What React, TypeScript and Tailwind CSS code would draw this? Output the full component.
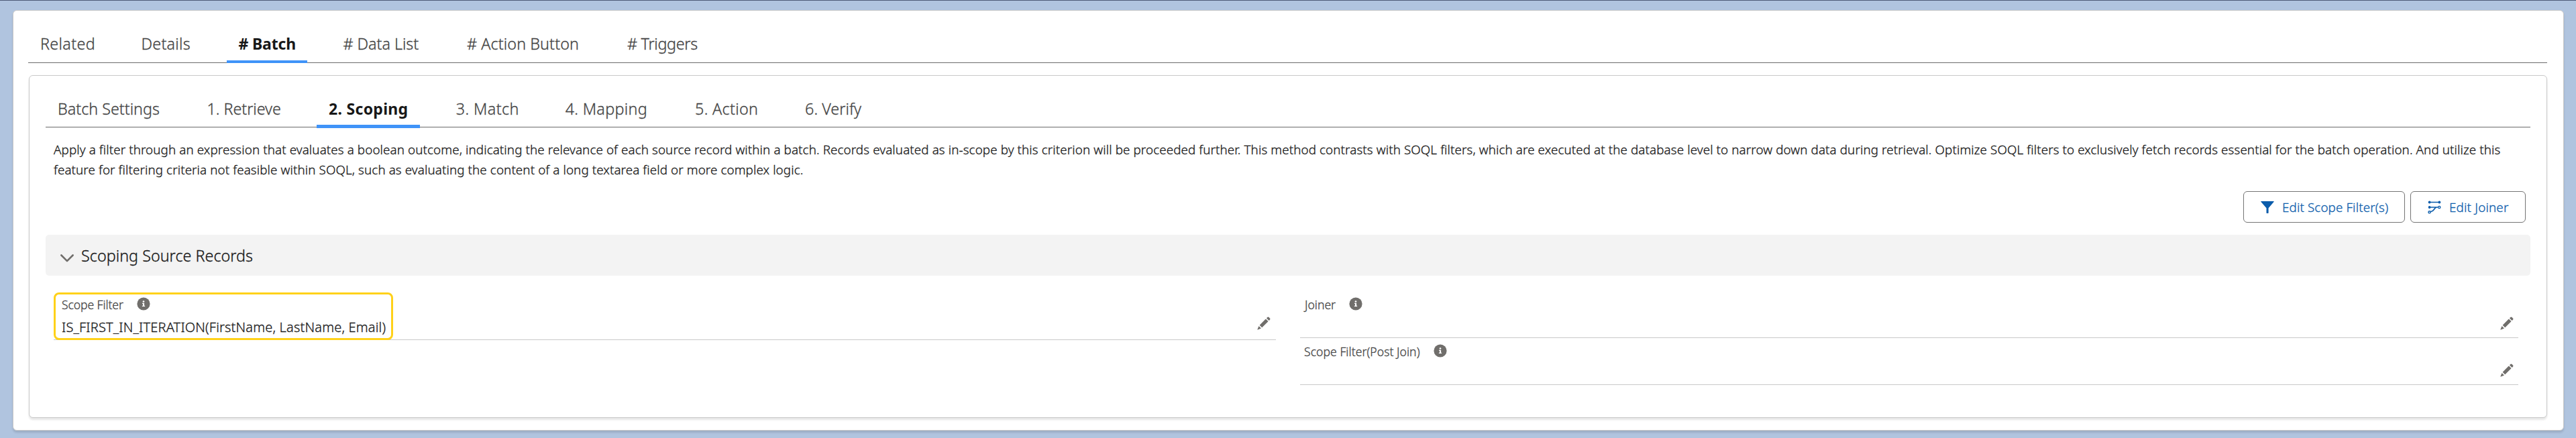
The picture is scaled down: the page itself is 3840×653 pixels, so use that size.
import type { ReactNode } from "react";

type Tab = { label: string; box: string; active?: boolean };

const recordTabs: Tab[] = [
  { label: "Related", box: "w-[78.5px] tracking-[0.35px]" },
  { label: "Details", box: "w-[73px] tracking-[0.25px]" },
  { label: "# Batch", box: "w-[84px] tracking-[-0.17px]", active: true },
  { label: "# Data List", box: "w-[112.5px] tracking-[-0.03px]" },
  { label: "# Action Button", box: "w-[167px] tracking-[0.1px]" },
  { label: "# Triggers", box: "w-[106px] tracking-[-0.3px]" },
];

const batchTabs: Tab[] = [
  { label: "Batch Settings", box: "w-[150.5px] tracking-[0.01px]" },
  { label: "1. Retrieve", box: "w-[109.5px] tracking-[-0.02px]" },
  { label: "2. Scoping", box: "w-[117.7px] tracking-[0.3px]", active: true },
  { label: "3. Match", box: "w-[91px] tracking-[0.43px]" },
  { label: "4. Mapping", box: "w-[121.4px] tracking-[0.33px]" },
  { label: "5. Action", box: "w-[92px] tracking-[0.33px]" },
  { label: "6. Verify", box: "w-[85px] tracking-[0.03px]" },
];

function TabBar({ tabs, className, bar }: { tabs: Tab[]; className: string; bar: string }) {
  return (
    <nav className={`flex gap-9 border-b border-[#6b6b6b] pt-[34px] leading-[30px] ${className}`}>
      {tabs.map((tab) => (
        <div key={tab.label} className="flex flex-col justify-between px-[18px]">
          <span
            className={`block whitespace-nowrap ${tab.box} ${
              tab.active
                ? "text-[23px] font-bold text-[#181818] [-webkit-text-stroke:0]"
                : "text-[23.3px] text-[#444444]"
            }`}
          >
            {tab.label}
          </span>
          {tab.active && <span className={`-mx-[18px] block shrink-0 bg-[#3f93f8] ${bar}`} />}
        </div>
      ))}
    </nav>
  );
}

function InfoIcon() {
  return (
    <svg viewBox="0 0 20 20" className="size-5 shrink-0">
      <circle cx="10" cy="10" r="9.6" fill="#706e6b" />
      <circle cx="10" cy="6.5" r="1.35" fill="#fff" />
      <path d="M8 8.7h3.1v4.1h1v1.3H7.9v-1.3h1.1V10H8z" fill="#fff" />
    </svg>
  );
}

function PencilIcon() {
  return (
    <svg viewBox="0 0 20 20" className="size-5 shrink-0" fill="#706e6b">
      <path d="M3.9 12.4 12.5 3.8a.5.5 0 0 1 .7 0l3 3a.5.5 0 0 1 0 .7l-8.6 8.6a.5.5 0 0 1-.7 0l-3-3a.5.5 0 0 1 0-.7Z" />
      <path d="m14.3 2 .9-.9a1.7 1.7 0 0 1 2.4 0l1.3 1.3a1.7 1.7 0 0 1 0 2.4l-.9.9a.5.5 0 0 1-.7 0l-3-3a.5.5 0 0 1 0-.7Z" />
      <path d="M2.3 14.5.5 19a.5.5 0 0 0 .6.6l4.5-1.8a.4.4 0 0 0 .1-.6l-2.8-2.8a.4.4 0 0 0-.6.1Z" />
    </svg>
  );
}

function FilterIcon() {
  return (
    <svg viewBox="0 0 20 20" className="size-5" fill="#0b5cab">
      <path d="M.9 1h18.2c.5 0 .8.6.4 1l-7.9 9.2v7c0 .4-.3.7-.6.7H9.2c-.4 0-.7-.3-.7-.7v-7L.5 2C.1 1.6.4 1 .9 1Z" />
    </svg>
  );
}

function JoinerIcon() {
  return (
    <svg viewBox="0 0 20 20" className="size-5" fill="none" stroke="#0b5cab" strokeWidth="1.7">
      <path d="M3 2.5h14M3 10h12M4.3 16.7c3.4-.5 4.2-2.1 5.4-3.9 1-1.5 2-2.5 3.6-2.8" />
      <circle cx="2.6" cy="2.5" r="1.9" fill="#0b5cab" stroke="none" />
      <circle cx="17.4" cy="2.5" r="1.9" fill="#0b5cab" stroke="none" />
      <circle cx="2.6" cy="10" r="1.9" fill="#0b5cab" stroke="none" />
      <circle cx="17.2" cy="10" r="1.6" strokeWidth="1.4" />
      <circle cx="2.6" cy="17.3" r="1.6" strokeWidth="1.4" />
    </svg>
  );
}

function ActionButton({ icon, className, children }: { icon: ReactNode; className: string; children: ReactNode }) {
  return (
    <button
      className={`flex h-[47px] items-center gap-3 rounded-md border border-[#747474] bg-white pl-[25px] text-[18.8px] leading-[30px] whitespace-nowrap text-[#0b5cab] ${className}`}
    >
      {icon}
      {children}
    </button>
  );
}

function FieldLabel({ text, className, gap }: { text: string; className: string; gap: string }) {
  return (
    <div className={`flex text-[17.6px] leading-6 text-[#444444] ${className}`}>
      <span className="whitespace-nowrap">{text}</span>
      <span className={`-mt-px flex h-6 items-center ${gap}`}>
        <InfoIcon />
      </span>
    </div>
  );
}

export default function App() {
  return (
    <div className="flex h-[653px] w-[3840px] flex-col border-t border-[#4d5a76] bg-[#b0c4df] pt-[14px] pr-[18px] pl-[19px] font-['Noto_Sans',sans-serif] font-light text-[#181818] [-webkit-text-stroke:0.3px]">
      <main className="h-[627px] rounded-[6px] border border-[#c9c9c9] bg-white pr-6 pl-[23px] shadow-[0_3px_3px_rgba(0,0,0,0.12)]">
        <TabBar tabs={recordTabs} className="-ml-px h-[78px]" bar="-mb-px h-1" />

        <section className="mt-[18px] h-[511px] rounded-[6px] border border-[#c9c9c9] bg-white px-6 shadow-[0_3px_3px_rgba(0,0,0,0.1)]">
          <TabBar tabs={batchTabs} className="h-[77px]" bar="-mb-[2px] h-[5px]" />

          <p className="mt-[18px] pr-3 pl-3 text-[18.8px] leading-[30px] tracking-[0.11px]">
            Apply a filter through an expression that evaluates a boolean outcome, indicating the relevance of each
            source record within a batch. Records evaluated as in-scope by this criterion will be proceeded further.
            This method contrasts with SOQL filters, which are executed at the database level to narrow down data during
            retrieval. Optimize SOQL filters to exclusively fetch records essential for the batch operation. And utilize
            this feature for filtering criteria not feasible within SOQL, such as evaluating the content of a long
            textarea field or more complex logic.
          </p>

          <div className="mt-[17px] flex justify-end gap-2 pr-[7px]">
            <ActionButton icon={<FilterIcon />} className="w-[241px] tracking-[0.13px]">
              Edit Scope Filter(s)
            </ActionButton>
            <ActionButton icon={<JoinerIcon />} className="w-[172px] tracking-[0.19px]">
              Edit Joiner
            </ActionButton>
          </div>

          <h2 className="mt-[18px] flex h-[61px] items-center rounded-[5px] bg-[#f3f3f3] pl-[22px] text-[23.3px] leading-[30px] tracking-[0.04px]">
            <svg
              viewBox="0 0 20 12"
              className="mt-[9px] mr-[11px] h-3 w-5"
              fill="none"
              stroke="#706e6b"
              strokeWidth="2.6"
              strokeLinecap="round"
              strokeLinejoin="round"
            >
              <path d="m1.4 1.5 8.6 8.7 8.6-8.7" />
            </svg>
            <span className="pt-px">Scoping Source Records</span>
          </h2>

          <div className="mt-[25px] flex items-start gap-9 pl-3">
            <div className="flex h-[71px] w-[1822px] items-end justify-between border-b border-[#c9c9c9] pr-2">
              <div className="-mb-px h-[71px] w-[506px] self-start rounded-[8px] border-[3px] border-[#ffd119] pt-[3px] pl-[9px]">
                <FieldLabel text="Scope Filter" className="tracking-[-0.1px]" gap="ml-[20px]" />
                <div className="mt-[8px] text-[20px] leading-7 tracking-[0.18px] whitespace-nowrap">
                  IS_FIRST_IN_ITERATION(FirstName, LastName, Email)
                </div>
              </div>
              <div className="pb-[14px]">
                <PencilIcon />
              </div>
            </div>

            <div className="w-[1816px]">
              <div className="flex h-[68px] justify-between border-b border-[#c9c9c9] pr-[7px] pl-[7px]">
                <FieldLabel text="Joiner" className="pt-[6px]" gap="ml-[20px]" />
                <div className="self-end pb-[11px]">
                  <PencilIcon />
                </div>
              </div>
              <div className="flex h-[70px] justify-between border-b border-[#c9c9c9] pr-[7px] pl-[6px]">
                <FieldLabel text="Scope Filter(Post Join)" className="pt-[8px] tracking-[0.04px]" gap="ml-[20px]" />
                <div className="self-end pb-[11px]">
                  <PencilIcon />
                </div>
              </div>
            </div>
          </div>
        </section>
      </main>
    </div>
  );
}
